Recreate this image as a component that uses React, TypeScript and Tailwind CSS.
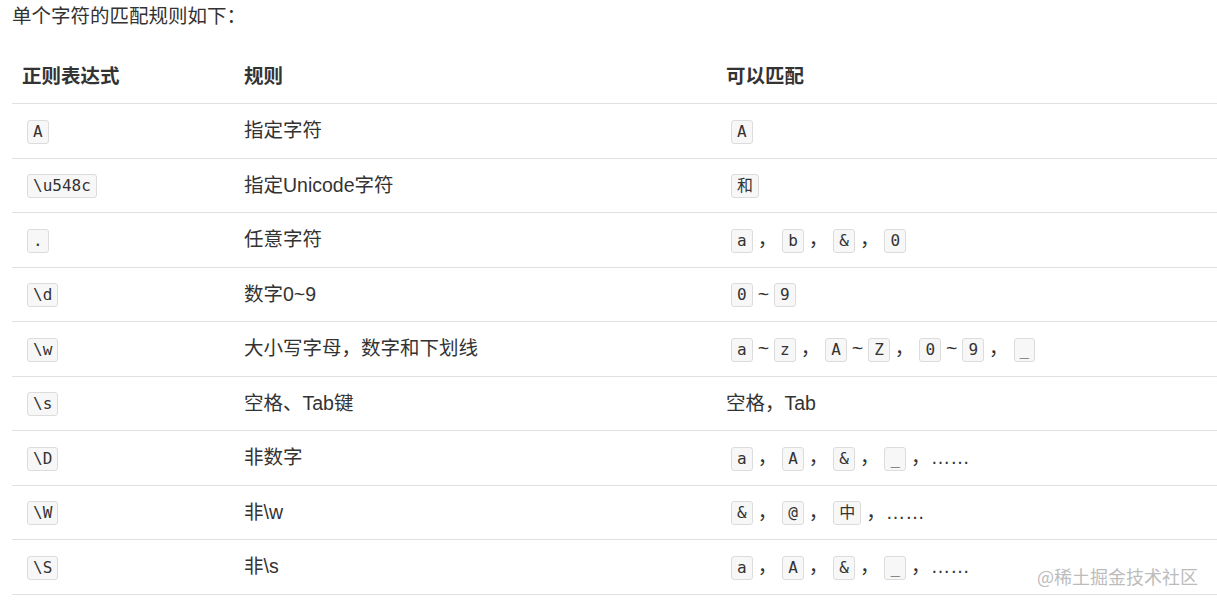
import React from "react";

const C = ({ children }: { children: React.ReactNode }) => (
  <code className="mx-[5px] inline-block rounded-[3px] border border-[#dcdcdc] bg-[#f7f7f7] px-[5px] align-middle text-[16px] leading-[22px] text-[#333] [font-family:'DejaVu_Sans_Mono','Noto_Sans_CJK_SC',monospace]">
    {children}
  </code>
);

const Sep = () => <span>，</span>;
const Tilde = () => <span>~</span>;

const rows: { re: string; rule: string; match: React.ReactNode }[] = [
  { re: "A", rule: "指定字符", match: <C>A</C> },
  { re: "\\u548c", rule: "指定Unicode字符", match: <C>和</C> },
  {
    re: ".",
    rule: "任意字符",
    match: (
      <>
        <C>a</C><Sep /><C>b</C><Sep /><C>&amp;</C><Sep /><C>0</C>
      </>
    ),
  },
  {
    re: "\\d",
    rule: "数字0~9",
    match: (
      <>
        <C>0</C><Tilde /><C>9</C>
      </>
    ),
  },
  {
    re: "\\w",
    rule: "大小写字母，数字和下划线",
    match: (
      <>
        <C>a</C><Tilde /><C>z</C><Sep /><C>A</C><Tilde /><C>Z</C><Sep /><C>0</C><Tilde /><C>9</C><Sep /><C>_</C>
      </>
    ),
  },
  { re: "\\s", rule: "空格、Tab键", match: <span>空格，Tab</span> },
  {
    re: "\\D",
    rule: "非数字",
    match: (
      <>
        <C>a</C><Sep /><C>A</C><Sep /><C>&amp;</C><Sep /><C>_</C><Sep /><span>……</span>
      </>
    ),
  },
  {
    re: "\\W",
    rule: "非\\w",
    match: (
      <>
        <C>&amp;</C><Sep /><C>@</C><Sep /><C>中</C><Sep /><span>……</span>
      </>
    ),
  },
  {
    re: "\\S",
    rule: "非\\s",
    match: (
      <>
        <C>a</C><Sep /><C>A</C><Sep /><C>&amp;</C><Sep /><C>_</C><Sep /><span>……</span>
      </>
    ),
  },
];

export default function App() {
  return (
    <div className="relative min-h-[607px] w-[1217px] bg-white text-[19.5px] text-[#333] [font-family:'Liberation_Sans','Noto_Sans_CJK_SC',sans-serif]">
      <p className="h-[49.5px] pl-[12px] leading-[32px]">单个字符的匹配规则如下：</p>

      <div className="ml-[12px]">
        {/* Header */}
        <div className="grid h-[54.5px] grid-cols-[222px_482px_1fr] items-center border-b border-[#e1e1e1] font-bold">
          <div className="pl-[10px]">正则表达式</div>
          <div className="pl-[10px]">规则</div>
          <div className="pl-[10px]">可以匹配</div>
        </div>

        {rows.map((r) => (
          <div
            key={r.re}
            className="grid h-[54.5px] grid-cols-[222px_482px_1fr] items-center border-b border-[#e1e1e1]"
          >
            <div className="pl-[10px]">
              <C>{r.re}</C>
            </div>
            <div className="pl-[10px]">{r.rule}</div>
            <div className="pl-[10px]">{r.match}</div>
          </div>
        ))}
      </div>

      {/* watermark */}
      <div className="absolute right-[19px] top-[563px] text-[18px] text-[#bcbcbc] [font-family:'Noto_Sans_CJK_SC',sans-serif]">
        @稀土掘金技术社区
      </div>
    </div>
  );
}
